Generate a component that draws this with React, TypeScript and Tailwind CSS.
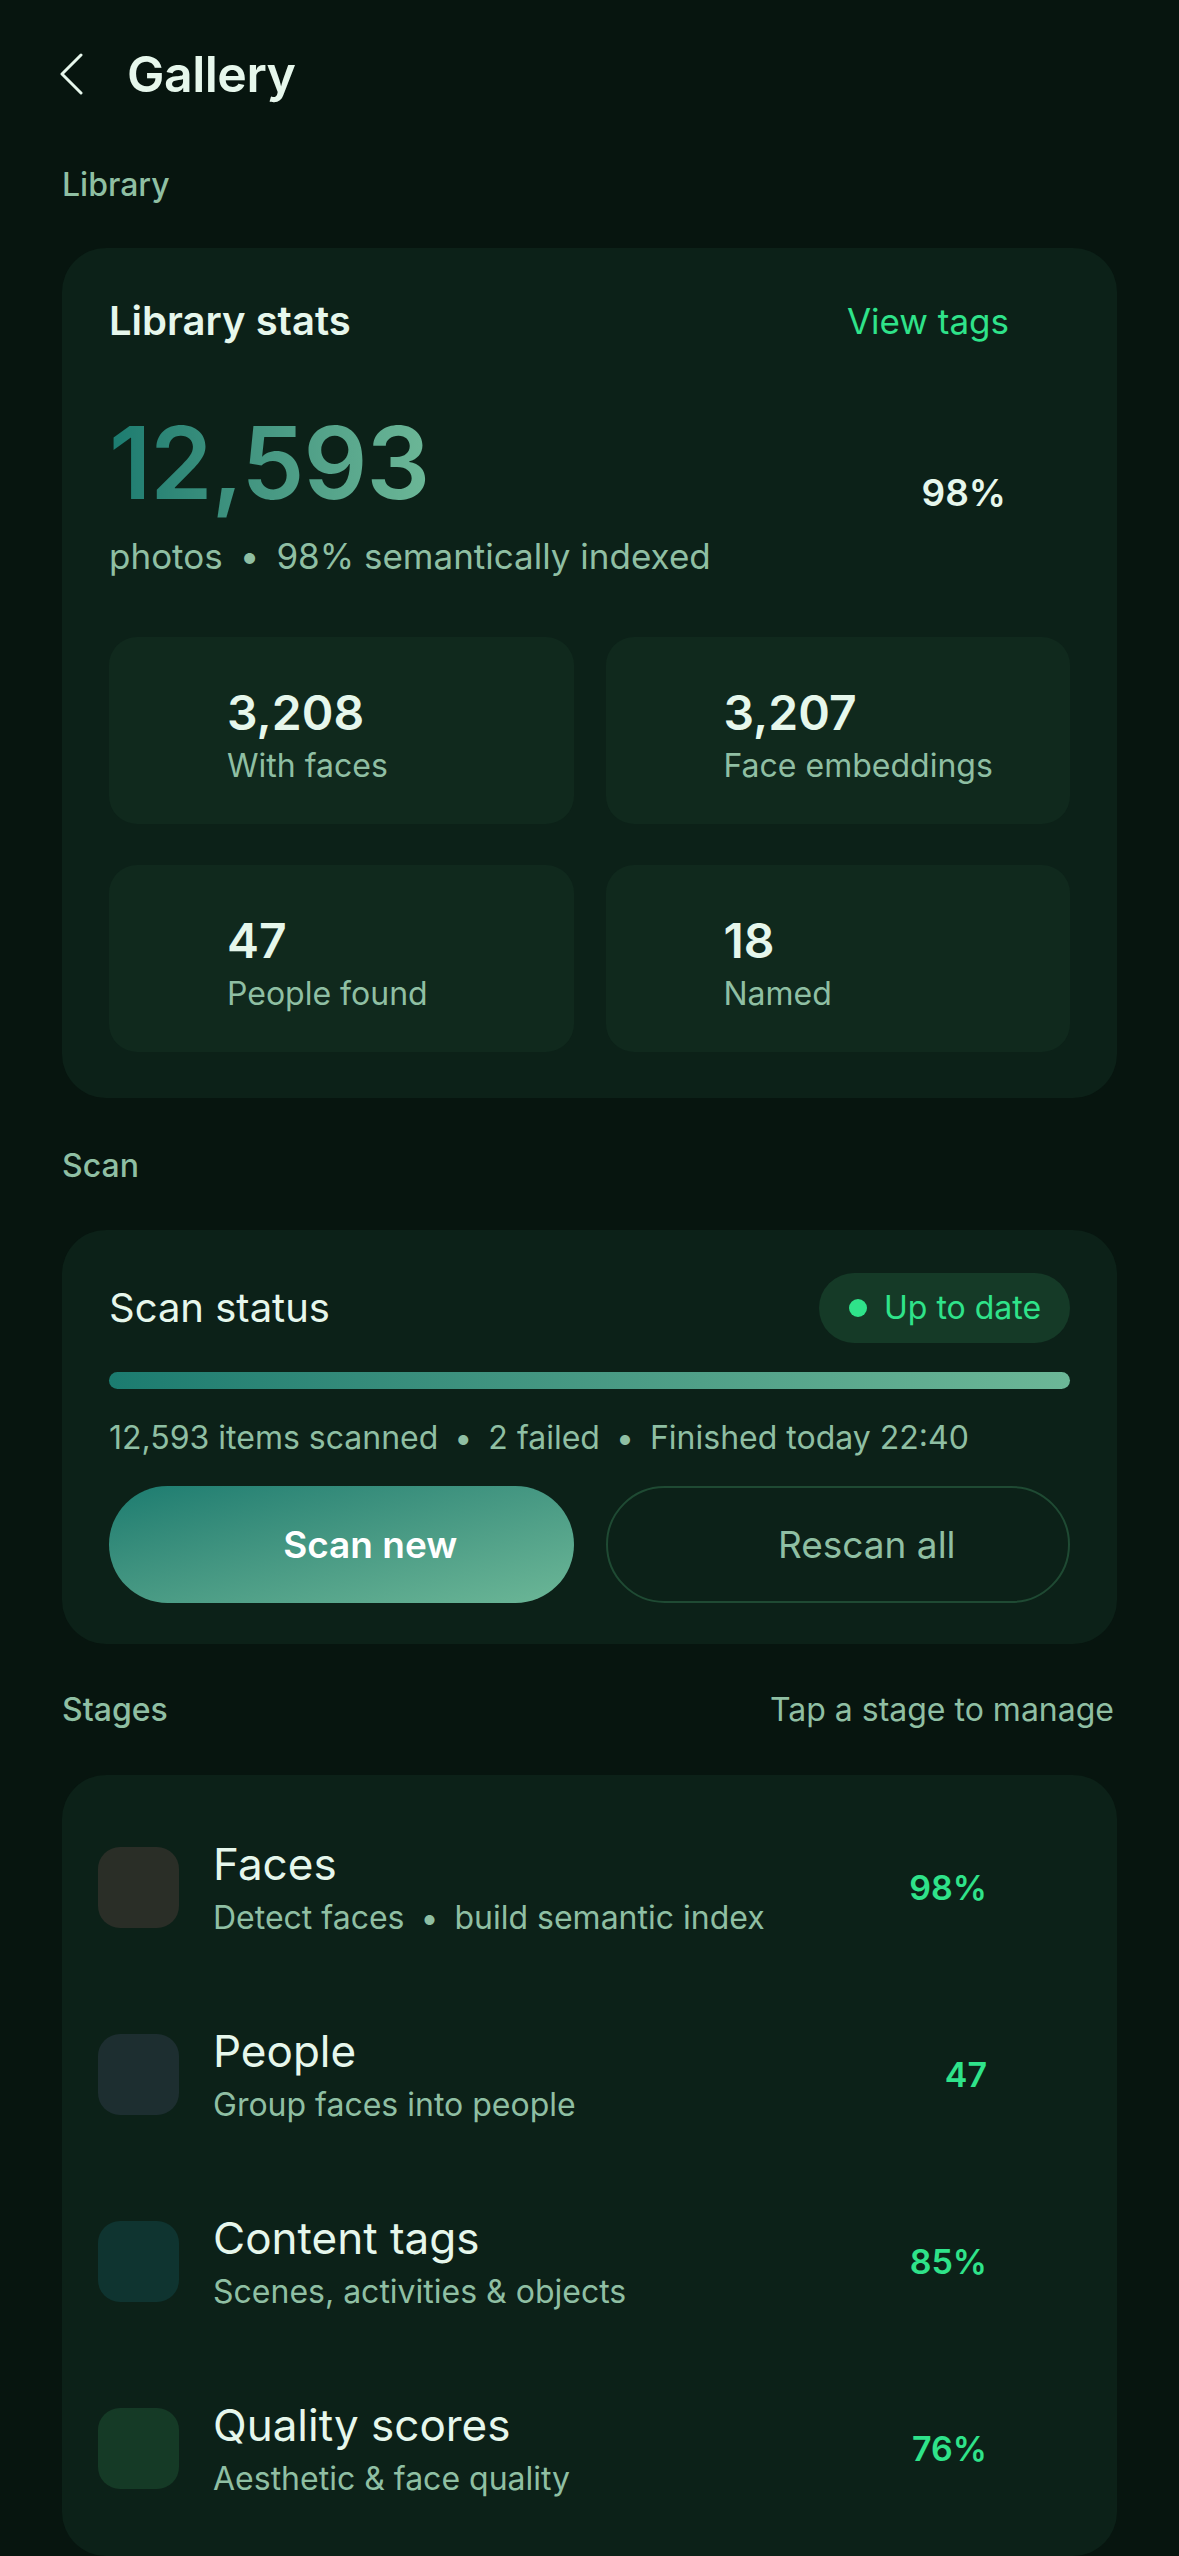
import React from "react";

const stats = [
  { value: "3,208", label: "With faces" },
  { value: "3,207", label: "Face embeddings" },
  { value: "47", label: "People found" },
  { value: "18", label: "Named" },
];

const stages = [
  { title: "Faces", sub: ["Detect faces", "build semantic index"], value: "98%", color: "bg-[#2a2e27]" },
  { title: "People", sub: ["Group faces into people"], value: "47", color: "bg-[#1d2e30]" },
  { title: "Content tags", sub: ["Scenes, activities & objects"], value: "85%", color: "bg-[#0f3430]" },
  { title: "Quality scores", sub: ["Aesthetic & face quality"], value: "76%", color: "bg-[#153a26]" },
];

function Dot() {
  return <span className="mx-[16px]">•</span>;
}

function SectionLabel({ children, right }: { children: React.ReactNode; right?: string }) {
  return (
    <div className="flex items-center justify-between">
      <span className="text-[32px] leading-[40px] font-medium text-[#8fbfa3]">{children}</span>
      {right && <span className="mr-[3px] text-[32px] leading-[40px] text-[#8fbfa3]">{right}</span>}
    </div>
  );
}

export default function App() {
  return (
    <div
      className="min-h-[2556px] w-full bg-[#07150f] px-[62px] pt-[44px] pb-[3px] text-[#e6f7ec]"
      style={{ fontFamily: "Inter, 'Noto Sans', sans-serif" }}
    >
      {/* header */}
      <div className="flex h-[60px] items-center">
        <svg width="24" height="42" viewBox="0 0 24 42" className="-ml-[2px]">
          <polyline points="21,2 2,21 21,40" fill="none" stroke="#e6f7ec" strokeWidth="3" strokeLinecap="round" strokeLinejoin="round" />
        </svg>
        <h1 className="ml-[43px] text-[50px] leading-[60px] font-semibold tracking-[-0.5px]">Gallery</h1>
      </div>

      {/* library */}
      <div className="mt-[61px]">
        <SectionLabel>Library</SectionLabel>
      </div>
      <div className="mt-[43px] rounded-[44px] bg-[#0c2118] px-[47px] pt-[49px] pb-[46px]">
        <div className="flex items-center justify-between">
          <span className="text-[40px] leading-[48px] font-semibold">Library stats</span>
          <span className="mr-[61px] text-[35px] leading-[48px] text-[#2fe38a]">View tags</span>
        </div>
        <div className="mt-[63px] flex items-center justify-between">
          <div>
            <div className="w-fit bg-gradient-to-r from-[#1b7c70] to-[#6cb797] bg-clip-text text-[100px] leading-[110px] font-semibold tracking-[-1px] text-transparent">
              12,593
            </div>
            <div className="mt-[17px] text-[35px] leading-[42px] text-[#8fbfa3]">
              photos<span className="mx-[17px]">•</span>98% semantically indexed
            </div>
          </div>
          <span className="mr-[64px] text-[37px] font-semibold">98%</span>
        </div>
        <div className="mt-[60px] grid grid-cols-2 gap-x-[32px] gap-y-[41px]">
          {stats.map((s) => (
            <div key={s.label} className="h-[187px] rounded-[28px] bg-[#10291d] pl-[118px] pt-[48px]">
              <div className="text-[48px] leading-[56px] font-semibold">{s.value}</div>
              <div className="mt-[5px] text-[32px] leading-[40px] text-[#8fbfa3]">{s.label}</div>
            </div>
          ))}
        </div>
      </div>

      {/* scan */}
      <div className="mt-[48px]">
        <SectionLabel>Scan</SectionLabel>
      </div>
      <div className="mt-[44px] rounded-[44px] bg-[#0c2118] px-[47px] pt-[43px] pb-[41px]">
        <div className="flex items-center justify-between">
          <span className="text-[40px] leading-[48px]">Scan status</span>
          <div className="flex h-[70px] w-[251px] items-center gap-[17px] rounded-full bg-[#153a27] pl-[30px]">
            <span className="h-[18px] w-[18px] rounded-full bg-[#2fe38a]" />
            <span className="text-[32px] leading-[40px] text-[#2fe38a]">Up to date</span>
          </div>
        </div>
        <div className="mt-[29px] h-[17px] rounded-full bg-gradient-to-r from-[#1b7c70] to-[#6cb797]" />
        <div className="mt-[29px] text-[32px] leading-[40px] text-[#8fbfa3]">
          12,593 items scanned<Dot />2 failed<Dot />Finished today 22:40
        </div>
        <div className="mt-[28px] grid grid-cols-2 gap-x-[32px]">
          <button className="flex h-[117px] items-center justify-center rounded-full bg-gradient-to-br from-[#1b7c70] to-[#6cb797] pl-[58px] text-[37px] font-semibold text-white">
            Scan new
          </button>
          <button className="flex h-[117px] items-center justify-center rounded-full border-2 border-[#1f4a33] pl-[58px] text-[37px] text-[#8fbfa3]">
            Rescan all
          </button>
        </div>
      </div>

      {/* stages */}
      <div className="mt-[46px]">
        <SectionLabel right="Tap a stage to manage">Stages</SectionLabel>
      </div>
      <div className="mt-[45px] rounded-[44px] bg-[#0c2118] pt-[19px] pb-[14px] pl-[36px]">
        {stages.map((s) => (
          <div key={s.title} className="flex h-[187px] items-center">
            <div className={`h-[81px] w-[81px] shrink-0 rounded-[22px] ${s.color}`} />
            <div className="ml-[34px] flex-1">
              <div className="text-[44px] leading-[52px]">{s.title}</div>
              <div className="mt-[8px] text-[32px] leading-[40px] text-[#8fbfa3]">
                {s.sub[0]}
                {s.sub[1] && (
                  <>
                    <Dot />
                    {s.sub[1]}
                  </>
                )}
              </div>
            </div>
            <span className="mr-[130px] text-[34px] font-semibold text-[#2fe38a]">{s.value}</span>
          </div>
        ))}
      </div>
    </div>
  );
}
